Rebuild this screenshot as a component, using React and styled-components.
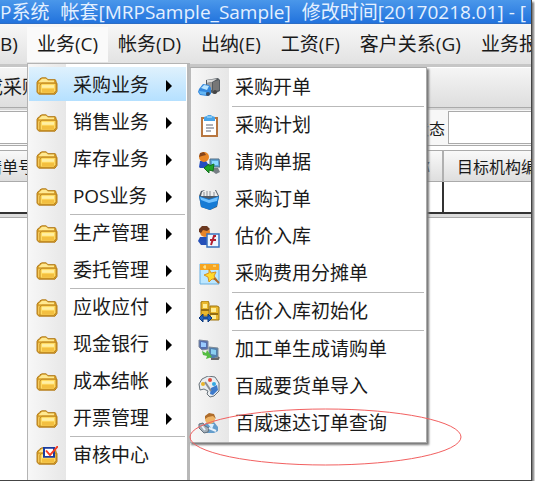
import React from 'react';
import styled, { createGlobalStyle, css } from 'styled-components';

const GlobalStyle = createGlobalStyle`
  * { box-sizing: border-box; }
  body {
    margin: 0;
    overflow: hidden;
    background: #fff;
    font-family: "Open Sans", "Noto Sans CJK SC", sans-serif;
    font-size: 19px;
    color: #1a1a1a;
  }
  button, input { font: inherit; color: inherit; }
`;

const Frame = styled.main`
  position: relative;
  display: flex;
  flex-direction: column;
  margin-right: 3px;
  height: calc(100vh - 3px);
  overflow: hidden;
  background: #fff;
  border-right: 1px solid #444;
  border-bottom: 1px solid #444;
  box-shadow: 2px 2px 2px #777;
`;

const TitleBar = styled.header`
  flex: none;
  display: flex;
  height: 24px;
  line-height: 24px;
  overflow: hidden;
  white-space: nowrap;
  color: #e4f0ff;
  background: linear-gradient(#4a97ea, #2273dd);
  border-bottom: 1px solid #2c6dc4;
`;

const TitlePart = styled.span`
  margin-right: 11px;
`;

const MenuBar = styled.nav`
  flex: none;
  display: flex;
  height: 43px;
  padding-top: 3px;
  white-space: nowrap;
  background: linear-gradient(#f7f7f7, #e2e2e2);
  border-bottom: 3px solid #c6c6c6;
`;

const MenuSlot = styled.div`
  flex: none;
  position: relative;
  height: 36px;
`;

const MenuButton = styled.button`
  height: 35px;
  padding: 0 ${p => (p.$cut ? '9px 0 0' : '10px')};
  border: 0;
  line-height: 35px;
  white-space: nowrap;
  background: ${p => (p.$open ? '#fafafa' : 'transparent')};
`;

const ToolBar = styled.div`
  flex: none;
  height: 41px;
  padding-top: 1px;
  line-height: 36px;
  white-space: nowrap;
  overflow: hidden;
  background: linear-gradient(#f5f5f5, #dedede);
  border-top: 1px solid #fff;
  border-bottom: 1px solid #aaa;
`;

const ToolButton = styled.button`
  margin-left: -16px;
  padding: 0;
  border: 0;
  background: none;
`;

const FilterRow = styled.div`
  flex: none;
  display: grid;
  grid-template-columns: 448px 1fr;
  height: 38px;
  padding: 1px 0 2px;
  font-size: 16px;
  background: #f7f7f7;
  border-top: 2px solid #d8d8d8;
  border-bottom: 1px solid #aaa;
`;

const Field = styled.label`
  display: flex;
  align-items: center;
  gap: 4px;
  padding-right: 3px;
`;

const TextBox = styled.input`
  flex: 1;
  min-width: 0;
  height: 33px;
  border: 1px solid #aaa;
  border-right: 0;
  border-left-width: ${p => (p.$cut ? 0 : '1px')};
  background: #fff;
`;

const Grid = styled.table`
  flex: none;
  width: 100%;
  margin-top: 4px;
  table-layout: fixed;
  border-collapse: separate;
  border-spacing: 0;
  font-size: 16px;
  border-bottom: 2px solid #333;
  box-shadow: 0 3px #ddd, 0 4px #aaa;
`;

const HeadCell = styled.th`
  width: ${p => (p.$wide ? '444px' : 'auto')};
  height: 32px;
  padding: 0 0 0 13px;
  overflow: hidden;
  white-space: nowrap;
  font-weight: 400;
  text-align: left;
  background: linear-gradient(#f9f9f9, #dedede);
  border-top: 1px solid #aaa;
  border-bottom: 1px solid #aaa;
  border-right: 2px solid #b0b0b0;
  &:last-child { border-right: 0; }
`;

const HeadPair = styled.span`
  display: flex;
  justify-content: space-between;
  margin: 0 12px 0 -27px;
`;

const BodyCell = styled.td`
  height: 30px;
  padding: 0;
  border-right: 2px solid #333;
  &:last-child { border-right: 0; }
`;

const panel = css`
  position: absolute;
  z-index: 2;
  background: linear-gradient(90deg, #f7f7f7, #e7e7e7 38px, #fff 38px);
`;

const Menu = styled.div`
  ${panel}
  top: 36px;
  left: 0;
  width: 163px;
  padding: 3px 1px 20px;
  border: 1px solid #b4b4b4;
  border-right: 3px solid #b8b8b8;
`;

const SubMenu = styled.div`
  ${panel}
  top: 3px;
  left: 161px;
  width: 238px;
  padding: 1px 1px 0;
  border: 1px solid #aaa;
  border-left: 2px solid #bbb;
  box-shadow: 2px 2px 2px #777;
`;

const Entry = styled.button`
  position: relative;
  display: grid;
  grid-template-columns: 22px 1fr 6px;
  align-items: center;
  column-gap: 15px;
  width: 100%;
  height: 37px;
  padding: 0 14px 0 ${p => (p.$sub ? '6px' : '7px')};
  border: 0;
  line-height: 35px;
  text-align: left;
  white-space: nowrap;
  background: ${p => (p.$active ? 'linear-gradient(#dff1fd, #b5e0ff) 0 0 / 100% 34px no-repeat' : 'none')};
`;

const Rule = styled.hr`
  height: 1px;
  margin: ${p => (p.$sub ? '0 1px 0 40px' : '-1px 1px 0 41px')};
  border: 0;
  background: #b9b9b9;
`;

const Glyph = styled.svg`
  display: block;
  width: ${p => p.$w}px;
  height: ${p => p.$h}px;
`;

const Ring = styled.svg`
  position: absolute;
  z-index: 3;
  top: 408px;
  left: 189px;
  width: 273px;
  height: 58px;
  pointer-events: none;
`;

function Folder({ checked }) {
  return (
    <Glyph $w={22} $h={20} viewBox="0 0 22 22" preserveAspectRatio="none" aria-hidden="true">
      <path d="M1 18V7l1-2 2-1V3l2-1h4l2 2h7l1 1v2l1 1v9l-2 3H3z" fill="#d9a22d" stroke="#b17916" />
      <path d="M3 6l3-3h4l2 2h6v2H3z" fill="#ffe992" />
      <path d="M2 9h2v9H2z" fill="#f5ca5b" />
      <path d="M4 10l2-2h14v8l-2 3H4z" fill="#ffda61" stroke="#bd851d" />
      <path d="M6 10h12v3H6z" fill="#fff0a5" />
      <path d="M6 14h12v4H6z" fill="#f3bf40" />
      {checked && (
        <>
          <path d="M8 2h10v10H8z" fill="#fff" stroke="#193b9e" strokeWidth="2" />
          <path d="M10 5l4 5 8-10" fill="none" stroke="#f43b22" strokeWidth="2" />
        </>
      )}
    </Glyph>
  );
}

function Arrow() {
  return (
    <Glyph $w={6} $h={12} viewBox="0 0 6 12" aria-hidden="true">
      <path d="M0 0l6 6-6 6z" fill="#000" />
    </Glyph>
  );
}

const drawings = {
  truck: (
    <>
      <path d="M8 3l12-2 2 2v11l-6 3-8-4z" fill="#555b60" />
      <path d="M9 3l10-1-5 3-5 1z" fill="#ddd" />
      <path d="M9 6l5-1v8l-5-1z" fill="#999" />
      <path d="M15 5l6-2v10l-6 2z" fill="#777" />
      <circle cx="17" cy="15" r="2" fill="#444" />
      <path d="M1 12l4-5 6 1 2 3v6l-4 2-7-1-2-3z" fill="#3287dd" />
      <path d="M3 11l3-3 5 1-2 4z" fill="#b9e5ff" />
      <path d="M1 14l7 1v3l-6-1z" fill="#66b7f4" />
      <circle cx="10" cy="17" r="2" fill="#384c65" />
    </>
  ),
  clipboard: (
    <>
      <path d="M4 3h15v18H4z" fill="#fff" stroke="#b8763f" strokeWidth="2" />
      <path d="M6 6V2l3-1 1-1h3l1 1 3 1v4z" fill="#48a4e8" />
      <path d="M9 2h5" stroke="#bee9ff" />
      <path d="M8 10h7M8 13h8M8 16h5" stroke="#9599a4" strokeWidth="1.3" />
    </>
  ),
  request: (
    <>
      <path d="M1 15l1-6h6l2 3v4H2z" fill="#244dc0" />
      <circle cx="6" cy="5" r="5" fill="#e88524" />
      <path d="M1 5l1-4 4-1 2 3-4 1z" fill="#86451a" />
      <path d="M12 7h9l1 8H12z" fill="#5ba5d8" stroke="#536d83" />
      <path d="M14 9h6v4h-6z" fill="#8cdaff" />
      <path d="M15 16h5l2 4-4 2-4-3z" fill="#767e83" />
      <path d="M6 16l5-4v2l5-2-1 7-4-1v3z" fill="#22a428" stroke="#11721b" />
    </>
  ),
  bin: (
    <>
      <path d="M1 7l2-5 4-1h11l3 6-2 11-7 3-9-3z" fill="#515b66" />
      <path d="M3 7l1-4 3-2h10l3 6z" fill="#eee" />
      <path d="M6 3v4m3-5v5m3-5v5m4-4v4" stroke="#8b9095" />
      <path d="M1 7l10 3 10-3-2 10-7 4-9-3z" fill="#167bd5" />
      <path d="M2 8l9 3 9-3-1 4-8 2-8-3z" fill="#72c2ff" />
    </>
  ),
  estimate: (
    <>
      <path d="M0 15l2-4h7v8H3z" fill="#244fb8" />
      <circle cx="7" cy="6" r="5" fill="#e78529" />
      <path d="M1 6V3l3-3h5l3 3-3 2-4-1-2 3z" fill="#6b3820" />
      <path d="M9 8h12v13H9z" fill="#edf6ff" stroke="#3972bd" strokeWidth="1.5" />
      <path d="M18 10h-2l-3 9M12 14h6" fill="none" stroke="#b22031" strokeWidth="2" />
    </>
  ),
  expense: (
    <>
      <path d="M2 1h19v20H2z" fill="#bce7ff" stroke="#68aee0" />
      <path d="M2 1h19v6H2z" fill="#f7a520" />
      <path d="M5 4h3m-1-2v4m8-3h3" stroke="#fff4a6" />
      <path d="M11 6l2 4 5-1-2 4 3 4-5-1-3 3-1-5-4-2 5-2z" fill="#ffdb2b" stroke="#d9921e" />
      <path d="M16 15l5 5" stroke="#ad672b" strokeWidth="2" />
    </>
  ),
  initialise: (
    <>
      <path d="M3 1l2-1h5l1 2v13H3zM12 5h7l2 1v13h-9z" fill="#e9b72d" stroke="#9e7411" />
      <path d="M5 3h4v4H5zm8 4h5v4h-5zm0 7h5v4h-5z" fill="#ffed96" />
      <path d="M3 9h8M12 13h8" stroke="#966d12" strokeWidth="2" />
      <path d="M1 17l4-4v3h5v-3l4 4-4 4v-3H5v3z" fill="#2162bf" stroke="#0b377a" />
    </>
  ),
  transfer: (
    <>
      <path d="M1 1l9 1v8l-6 1-3-3z" fill="#546eae" stroke="#7f889a" />
      <path d="M3 3l5 1v4H3z" fill="#9acbff" />
      <path d="M11 8l9 1v9l-6 2-3-3z" fill="#517fad" stroke="#7f8b96" />
      <path d="M13 10l5 1v5l-5-1z" fill="#8acff1" />
      <path d="M4 12l4 2 1-3 5 7-6 2 1-3-4-1z" fill="#55bd42" />
      <path d="M13 20h7l1-2" stroke="#666" strokeWidth="2" fill="none" />
    </>
  ),
  palette: (
    <>
      <path d="M1 8l3-5 6-3 7 1 4 6v8l-5 5-4 1-3-3 1-3-4-2-4 1z" fill="#e9edf0" stroke="#68727a" />
      <circle cx="5" cy="8" r="2" fill="#e8b42b" />
      <circle cx="12" cy="4" r="2" fill="#e54b3c" />
      <circle cx="16" cy="8" r="2" fill="#31a7e2" />
      <path d="M12 18l1-6 6-3 1 5-5 5z" fill="#3d7acb" />
      <path d="M7 6l6 9" stroke="#8a8d93" strokeWidth="2" />
    </>
  ),
  contact: (
    <>
      <path d="M6 12l3-3h7l4 5v4l-4 2H5z" fill="#649dcb" />
      <circle cx="12" cy="6" r="5" fill="#efb466" />
      <path d="M7 6V3l4-3 5 1 2 5-3-3-5 1z" fill="#ae6c2b" />
      <path d="M10 11h6l-2 5z" fill="#d9efff" />
      <path d="M1 11l4-1 2 3 4 2-1 4-4 1-5-5z" fill="#a4afb9" stroke="#64717e" />
      <path d="M4 13l3 4m4-2l7 3" stroke="#e8f2fb" strokeWidth="2" />
    </>
  ),
};

function MenuIcon({ name }) {
  return <Glyph $w={22} $h={22} viewBox="0 0 22 22" aria-hidden="true">{drawings[name]}</Glyph>;
}

const business = [
  ['采购业务'], ['销售业务'], ['库存业务'], ['POS业务'],
  ['生产管理', true], ['委托管理'],
  ['应收应付', true], ['现金银行'], ['成本结帐'], ['开票管理'],
  ['审核中心', true],
];

const purchasing = [
  ['采购开单', 'truck'],
  ['采购计划', 'clipboard', true],
  ['请购单据', 'request'],
  ['采购订单', 'bin'],
  ['估价入库', 'estimate'],
  ['采购费用分摊单', 'expense'],
  ['估价入库初始化', 'initialise', true],
  ['加工单生成请购单', 'transfer', true],
  ['百威要货单导入', 'palette'],
  ['百威速达订单查询', 'contact'],
];

function BusinessMenu() {
  return (
    <Menu role="menu" aria-label="业务">
      {business.map(([label, ruled], i) => {
        const last = i === business.length - 1;
        return (
          <React.Fragment key={label}>
            {ruled && <Rule />}
            <Entry role="menuitem" $active={i === 0}>
              <Folder checked={last} />
              <span>{label}</span>
              {!last && <Arrow />}
            </Entry>
          </React.Fragment>
        );
      })}
      <SubMenu role="menu" aria-label="采购业务">
        {purchasing.map(([label, icon, ruled]) => (
          <React.Fragment key={label}>
            {ruled && <Rule $sub />}
            <Entry role="menuitem" $sub>
              <MenuIcon name={icon} />
              <span>{label}</span>
            </Entry>
          </React.Fragment>
        ))}
      </SubMenu>
    </Menu>
  );
}

export default function App() {
  return (
    <>
      <GlobalStyle />
      <Frame>
        <TitleBar>
          <TitlePart>P系统</TitlePart>
          <TitlePart>帐套[MRPSample_Sample]</TitlePart>
          <TitlePart>修改时间[20170218.01] - [</TitlePart>
        </TitleBar>
        <MenuBar>
          <MenuSlot><MenuButton $cut>B)</MenuButton></MenuSlot>
          <MenuSlot>
            <MenuButton $open aria-haspopup="menu" aria-expanded="true">业务(C)</MenuButton>
            <BusinessMenu />
          </MenuSlot>
          {['帐务(D)', '出纳(E)', '工资(F)', '客户关系(G)', '业务报'].map(label => (
            <MenuSlot key={label}><MenuButton>{label}</MenuButton></MenuSlot>
          ))}
        </MenuBar>
        <ToolBar><ToolButton>成采购</ToolButton></ToolBar>
        <FilterRow>
          <Field><TextBox $cut />状态</Field>
          <TextBox aria-label="状态" />
        </FilterRow>
        <Grid>
          <thead>
            <tr>
              <HeadCell $wide><HeadPair><span>请单号</span><span>名称</span></HeadPair></HeadCell>
              <HeadCell>目标机构编</HeadCell>
            </tr>
          </thead>
          <tbody><tr><BodyCell /><BodyCell /></tr></tbody>
        </Grid>
        <Ring viewBox="0 0 273 58" aria-hidden="true">
          <ellipse cx="136.5" cy="29" rx="135.5" ry="28" fill="none" stroke="#f26060" strokeWidth="1" />
        </Ring>
      </Frame>
    </>
  );
}
